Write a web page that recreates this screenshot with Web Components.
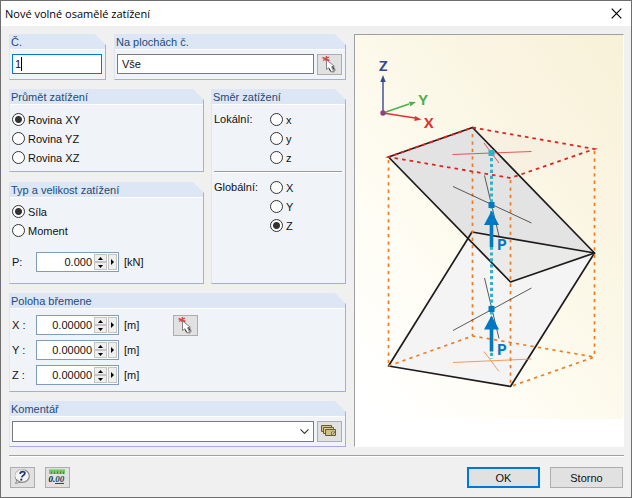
<!DOCTYPE html>
<html lang="cs">
<head>
<meta charset="utf-8">
<title>Nové volné osamělé zatížení</title>
<style>
html, body { margin: 0; height: 100%; }
body { font: 11px/14px "Liberation Sans", Arial, sans-serif; color: #111; background: #f0f0f0; }
</style>
</head>
<body>
<load-dialog></load-dialog>
<script>
function define(name, html, init) {
  const template = document.createElement('template');
  template.innerHTML = '<style>*{box-sizing:border-box}:host{box-sizing:border-box}[hidden]{display:none}</style>' + html;
  customElements.define(name, class extends HTMLElement {
    constructor() {
      super();
      this.attachShadow({ mode: 'open' }).append(template.content.cloneNode(true));
    }
    connectedCallback() { if (init) init(this, this.shadowRoot); }
  });
}

define('title-bar', `
<style>
:host { display: flex; align-items: center; justify-content: space-between; height: 25px; background: #fff; padding-left: 4px; font: 11px/16px "Open Sans", "Noto Sans", sans-serif; color: #000; }
h1 { font: inherit; margin: 0; }
button { border: 0; background: none; padding: 0; width: 30px; height: 24px; display: grid; place-items: center; }
</style>
<h1><slot></slot></h1>
<button type="button" aria-label="Zavřít"><svg width="11" height="11" viewBox="0 0 11 11"><path d="M.7.7l9.6 9.6M10.3.7L.7 10.3" stroke="#000" stroke-width="1.2"/></svg></button>
`);

define('group-box', `
<style>
:host { display: flex; flex-direction: column; min-width: 0; border-left: 1px solid #dce6f4; border-bottom: 1px solid #a8a8ee;
  background: linear-gradient(#a8a8ee, #a8a8ee) right bottom / 1px calc(100% - 10px) no-repeat #f0f4f9;
  clip-path: polygon(0 0, calc(100% - 11px) 0, 100% 11px, 100% 100%, 0 100%); }
h2 { margin: 0 1px 0 0; padding: 1px 1px 0; height: 16px; font: inherit; line-height: 15px; color: #1d4b78; background: #dce6f4; border-bottom: 1px solid #fff; white-space: nowrap; }
div { flex: 1; padding: 4px 4px 4px 2px; }
</style>
<h2></h2><div><slot></slot></div>
`, (el, root) => { root.querySelector('h2').textContent = el.getAttribute('heading'); });

const radioStyle = `
label { display: flex; align-items: center; gap: 3px; height: 19px; }
input { appearance: none; margin: 0; width: 13px; height: 13px; border: 1px solid #333; border-radius: 50%; background: #fff; }
input:checked { background: radial-gradient(circle, #333 3px, #fff 4px); }
`;

define('radio-list', `
<style>${radioStyle}
:host { display: flex; flex-direction: column; }
</style>
`, (el, root) => {
  const chosen = el.getAttribute('chosen');
  el.getAttribute('options').split('|').forEach(text => {
    const label = document.createElement('label');
    const input = document.createElement('input');
    input.type = 'radio';
    input.name = 'choice';
    input.checked = text === chosen;
    label.append(input, text);
    root.append(label);
  });
});

define('direction-choice', `
<style>${radioStyle}
:host { display: block; padding-top: 1px; }
fieldset { border: 0; margin: 0; padding: 0; min-width: 0; display: grid; grid-template-columns: 56px 1fr; }
.name { line-height: 18px; }
.options { min-width: 0; }
hr { border: 0; border-top: 1px solid #999; border-bottom: 1px solid #fff; height: 2px; margin: 4px 0 5px; }
</style>
<fieldset aria-label="Lokální"><span class="name">Lokální:</span><span class="options">
<label><input type="radio" name="direction">x</label><label><input type="radio" name="direction">y</label><label><input type="radio" name="direction">z</label></span></fieldset>
<hr>
<fieldset aria-label="Globální"><span class="name">Globální:</span><span class="options">
<label><input type="radio" name="direction">X</label><label><input type="radio" name="direction">Y</label><label><input type="radio" name="direction" checked>Z</label></span></fieldset>
`);

define('number-field', `
<style>
:host { display: flex; align-items: center; height: 20px; white-space: nowrap; }
label { width: 24px; }
.box { display: flex; width: 83px; height: 20px; border: 1px solid #7f9db9; background: #fff; padding: 1px; gap: 1px; }
input { flex: 1; min-width: 0; border: 0; padding: 0 1px 0 0; background: none; font: 11px/16px "Liberation Sans", Arial, sans-serif; color: #111; text-align: right; outline: 0; }
.spin { display: flex; flex-direction: column; width: 13px; }
button { flex: 1; min-height: 0; padding: 0; border: 1px solid #c4c4c4; background: #eee; display: grid; place-items: center; }
.more { flex: 0 0 9px; }
.unit { padding-left: 5px; }
</style>
<label for="value"></label>
<span class="box"><input id="value" type="text">
<span class="spin"><button type="button" aria-label="Zvýšit"><svg width="5" height="3"><path d="M0 3L2.5 0 5 3z"/></svg></button><button type="button" aria-label="Snížit"><svg width="5" height="3"><path d="M0 0L2.5 3 5 0z"/></svg></button></span>
<button class="more" type="button" aria-label="Další"><svg width="3" height="6"><path d="M0 0L3 3 0 6z"/></svg></button></span>
<span class="unit"></span>
`, (el, root) => {
  root.querySelector('label').textContent = el.getAttribute('label');
  root.querySelector('input').value = el.getAttribute('value');
  root.querySelector('.unit').textContent = el.getAttribute('unit');
});

define('text-field', `
<style>
:host { display: block; flex: 1; min-width: 0; }
input { display: block; width: 100%; height: 20px; border: 1px solid #7a7a7a; background: #fff; padding: 0 4px; margin: 0; font: 11px/16px "Liberation Sans", Arial, sans-serif; color: #111; outline: 0; }
:host([active]) input { border-color: #0078d7; padding: 0 2px; background: linear-gradient(#000, #000) 8px 2px / 1px 14px no-repeat #fff; }
</style>
<input type="text">
`, (el, root) => {
  const input = root.querySelector('input');
  input.value = el.getAttribute('value');
  input.setAttribute('aria-label', el.getAttribute('label'));
});

define('combo-box', `
<style>
:host { display: grid; flex: 1; min-width: 0; align-items: center; }
select, svg { grid-area: 1 / 1; }
select { appearance: none; width: 100%; height: 21px; border: 1px solid #7a7a7a; border-radius: 0; background: #fff; margin: 0; font: inherit; }
svg { justify-self: end; margin-right: 5px; pointer-events: none; }
</style>
<select aria-label="Komentář"><option></option></select>
<svg width="9" height="5" viewBox="0 0 9 5" fill="none" stroke="#333" stroke-width="1.1"><path d="M.5.4l4 4 4-4"/></svg>
`);

const icons = {
  pick: `<path d="M5.5 3.5l7 3M6 6.5l6-3.500M9.500 2l-.5 5" stroke="#d8474a" stroke-width="1.400"/><path d="M13 17l3.500 1 1.500-2-1.500-3" stroke="#999" stroke-width="1.500" fill="none"/><path d="M9.500 6v9.500l2.300-1.800 2.300 4.300 2.400-1.200-2-4 2.800-.6z" fill="#fff" stroke="#777" stroke-width=".9"/><path d="M12 14.500l1.500 2.500M15.500 12.500l1.500 3" stroke="#333"/>`,
  notes: `<path d="M4.500 4.500h10v6h-10z" fill="#d3c68a" stroke="#665f35"/><path d="M6.500 6.500h10v6h-10z" fill="#dbd092" stroke="#665f35"/><path d="M8.500 8.500h10v6h-10z" fill="#cfc17f" stroke="#665f35"/><path d="M14.500 14v-3h3.500z" fill="#fff" stroke="#665f35" stroke-width=".8"/>`,
  help: `<path d="M7 13l-1.500 3.500L11 15z" fill="#fff" stroke="#888"/><ellipse cx="12.300" cy="9" rx="7" ry="6.300" fill="#f4f4f6" stroke="#8a8a8a" stroke-width="1.200"/><path d="M6.800 12a6.500 5.800 0 0 1 8-8.600" fill="none" stroke="#fff"/><path d="M10 6.800c.5-3 5.400-2.800 4.800-.3-.5 2-2.700 1.800-3 3.900" fill="none" stroke="#25386f" stroke-width="1.800"/><circle cx="11.300" cy="12.700" r="1.100" fill="#25386f"/>`,
  units: `<path d="M4 2h16v5H4z" fill="#79c56c"/><path d="M4 2.500h16" stroke="#9bd790"/><path d="M6.500 4.500V7m3-2.500V7m3-2.500V7m3-2.500V7m3-2.500V7" stroke="#327d2c" stroke-width=".8"/><text x="3.500" y="15" font-family="Liberation Serif, serif" font-size="9" font-style="italic" font-weight="bold" fill="#111">0.<tspan fill="#254873">00</tspan></text><path d="M10 16.500h9" stroke="#254873"/>`
};
define('icon-button', `
<style>
:host { display: block; flex: none; }
button { display: block; width: 25px; height: 21px; padding: 0; border: 1px solid #adadad; background: #e1e1e1; }
svg { display: block; margin: -1px; }
</style>
<button type="button"></button>
`, (el, root) => {
  const button = root.querySelector('button');
  button.setAttribute('aria-label', el.getAttribute('label'));
  button.innerHTML = '<svg width="25" height="21" viewBox="0 0 25 21">' + icons[el.getAttribute('icon')] + '</svg>';
});

define('push-button', `
<style>
:host { display: block; }
button { display: block; width: 73px; height: 21px; padding: 0; border: 1px solid #adadad; background: #e1e1e1; font: inherit; color: #111; }
:host([primary]) button { border: 2px solid #0078d7; }
</style>
<button type="button"><slot></slot></button>
`);

define('load-preview', `
<style>
:host { display: block; min-width: 0; background: #fff; border: 1px solid #a0a0a0; border-right-color: #fff; border-bottom-color: #fff; overflow: hidden; }
svg { display: block; width: 100%; height: auto; font-family: Lato, "Open Sans", sans-serif; font-weight: 900; }
</style>
<svg viewBox="355 35 268 384" role="img" aria-label="Schéma zatížení">
<defs><linearGradient id="sky" x1="1" y1="0" x2=".1" y2="1"><stop offset="0" stop-color="#f8f1d9"/><stop offset=".3" stop-color="#faf5e2"/><stop offset=".65" stop-color="#fefcf1"/><stop offset="1" stop-color="#fff"/></linearGradient></defs>
<path d="M355 35h268v384H355z" fill="url(#sky)"/>
<path d="M388.500 157L472.500 127.500 594.500 149 510.500 178z" fill="#f5eee0" opacity=".7"/>
<path d="M388.500 157L472.500 127.500 594.500 253 510.500 282z" fill="#e3e3e4"/>
<path d="M472 232L594.500 253 510.500 386.500 388.500 366z" fill="#f4f4f5"/>
<path d="M472 232L594.500 253 510.500 282 468 240z" fill="#eaeae9"/>
<g fill="none" stroke="#1f1b1c" stroke-width="1.700" stroke-linejoin="round">
<path d="M388.500 157L472.500 127.500 594.500 253 510.500 282z"/><path d="M472 232L594.500 253 510.500 386.500 388.500 366z"/></g>
<g fill="none" stroke="#ee7d20" stroke-width="1.700" stroke-dasharray="3.300 4.100">
<path d="M388.500 160v206M472.500 134v202M510.500 180v206M594.500 151v206"/>
<path d="M388.500 366L472.500 336 594.500 357 510.500 386.500"/></g>
<path d="M472.500 127.500L594.500 149 510.500 178 388.500 157 472.500 127.500" fill="none" stroke="#df241f" stroke-width="1.800" stroke-dasharray="3.600 4"/>
<g fill="none" stroke-width=".8"><path d="M452.500 154.500l79-3M484 143l15 20" stroke="#dc3430"/><path d="M453 186.500l78.500 36.500M484.500 175.500l14.500 60.500M453 330.500l78.500-42.500M484.500 278l14.500 60.500" stroke="#333"/><path d="M453 362.500l78.500-3.500M484 351.500l15 20" stroke="#ec873c"/></g>
<path d="M491.500 158v201" stroke="#2fb2c4" stroke-width="3" stroke-dasharray="3.200 2.700"/>
<path d="M488.500 150h6v6h-6z" fill="#2fb2c4"/>
<g fill="#0078c4"><path d="M488.500 202h6v6h-6zM491.500 211l7.500 14h-5.700v22h-3.600v-22H484zM488.500 306h6v6h-6zM491.500 315.500l7.500 14h-5.700v22h-3.600v-22H484z"/>
<text x="497" y="250" font-size="15">P</text><text x="497" y="354.500" font-size="15">P</text></g>
<g stroke-width="1.400"><path d="M383 113V80" stroke="#344a91"/><path d="M383 113l26-9" stroke="#4bb04a"/><path d="M383 113l32 5" stroke="#e03230"/></g>
<path d="M383 75l2.700 7h-5.400z" fill="#344a91"/><path d="M416 102l-5.500 4.300-1.600-4.500z" fill="#4bb04a"/><path d="M421.500 119.500l-7.200 1.400.7-5z" fill="#e03230"/><circle cx="383" cy="113" r="2.700" fill="#914080"/>
<text x="379" y="71" font-size="14" fill="#344a91">Z</text><text x="418.500" y="105" font-size="14" fill="#4bb04a">Y</text><text x="424" y="127.500" font-size="14" fill="#e03230">X</text>
</svg>
`);

define('load-dialog', `
<style>
:host { display: flex; flex-direction: column; min-height: 100vh; border: 1px solid #6e6e6e; background: #f0f0f0; }
main { display: grid; grid-template-columns: 337fr 270fr; column-gap: 8px; padding: 8px 7px 8px 8px; }
.form { display: flex; flex-direction: column; gap: 9px; min-width: 0; }
.top { display: grid; grid-template-columns: 97fr 232fr; gap: 8px; }
.middle { display: grid; grid-template-columns: 195fr 135fr; gap: 7px; }
.stack { display: flex; flex-direction: column; gap: 10px; }
.row { display: flex; gap: 3px; height: 21px; }
.projection { padding: 1px 0 0; }
.type { padding: 0 0 7px; }
.type number-field { margin-top: 12px; }
.position { display: flex; gap: 34px; padding: 2px 0; }
.fields { display: flex; flex-direction: column; gap: 5px; }
footer { margin: 0 7px 0 8px; border-top: 1px solid #a0a0a0; box-shadow: inset 0 1px #fff; display: flex; justify-content: space-between; padding: 11px 1px 8px; }
footer div { display: flex; gap: 10px; }
</style>
<title-bar>Nové volné osamělé zatížení</title-bar>
<main>
<div class="form">
  <div class="top">
    <group-box heading="Č."><div class="row"><text-field active label="Č." value="1"></text-field></div></group-box>
    <group-box heading="Na plochách č."><div class="row"><text-field label="Na plochách č." value="Vše"></text-field><icon-button icon="pick" label="Vybrat plochy"></icon-button></div></group-box>
  </div>
  <div class="middle">
    <div class="stack">
      <group-box heading="Průmět zatížení"><div class="projection"><radio-list options="Rovina XY|Rovina YZ|Rovina XZ" chosen="Rovina XY"></radio-list></div></group-box>
      <group-box heading="Typ a velikost zatížení"><div class="type"><radio-list options="Síla|Moment" chosen="Síla"></radio-list><number-field label="P:" value="0.000" unit="[kN]"></number-field></div></group-box>
    </div>
    <group-box heading="Směr zatížení"><direction-choice></direction-choice></group-box>
  </div>
  <group-box heading="Poloha břemene"><div class="position"><div class="fields">
    <number-field label="X :" value="0.00000" unit="[m]"></number-field>
    <number-field label="Y :" value="0.00000" unit="[m]"></number-field>
    <number-field label="Z :" value="0.00000" unit="[m]"></number-field></div>
    <icon-button icon="pick" label="Vybrat bod"></icon-button></div></group-box>
  <group-box heading="Komentář"><div class="row"><combo-box></combo-box><icon-button icon="notes" label="Komentáře"></icon-button></div></group-box>
</div>
<load-preview></load-preview>
</main>
<footer><div><icon-button icon="help" label="Nápověda"></icon-button><icon-button icon="units" label="Jednotky"></icon-button></div><div><push-button primary>OK</push-button><push-button>Storno</push-button></div></footer>
`);
</script>
</body>
</html>
